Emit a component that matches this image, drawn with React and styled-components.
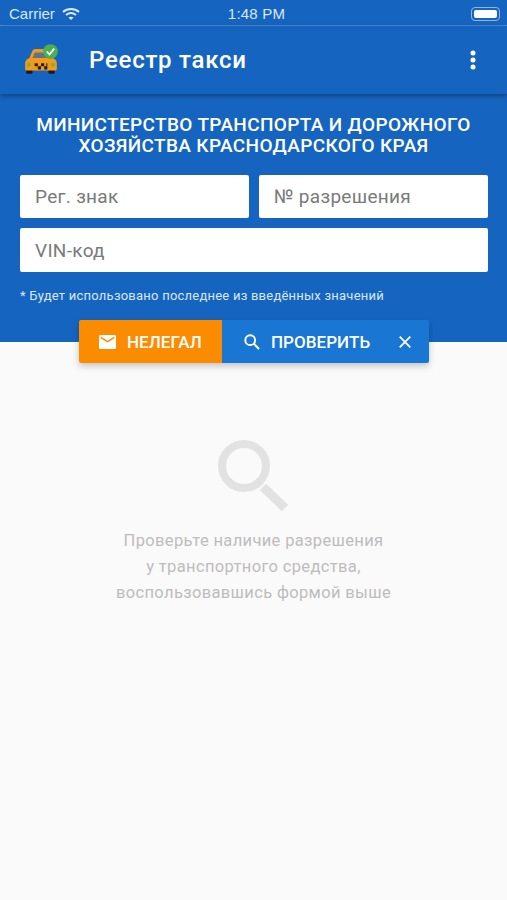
import styled, { createGlobalStyle } from 'styled-components'

const GlobalStyle = createGlobalStyle`
  html, body {
    margin: 0;
    padding: 0;
    background: #fafafa;
  }
  body {
    font-family: Roboto, "Liberation Sans", sans-serif;
  }
`

const Page = styled.div`
  width: 507px;
  height: 900px;
  overflow: hidden;
  display: flex;
  flex-direction: column;
  background: #fafafa;
`

const StatusBar = styled.div`
  height: 26px;
  box-sizing: border-box;
  padding: 2px 7px 0 9px;
  display: grid;
  grid-template-columns: 1fr auto 1fr;
  align-items: center;
  background: #1565c0;
  border-bottom: 1px solid #4f8ad2;
  color: #dbe7f6;
  font-family: "Liberation Sans", sans-serif;
  font-size: 15px;
`

const Carrier = styled.div`
  display: flex;
  align-items: center;
  gap: 7px;
`

const Clock = styled.div`
  padding-left: 4px;
  font-weight: 500;
  letter-spacing: 0.2px;
`

const Battery = styled.div`
  justify-self: end;
  width: 29px;
  height: 14px;
  box-sizing: border-box;
  padding: 2px;
  border: 1px solid #8fb4e2;
  border-radius: 4px;
`

const BatteryFill = styled.div`
  height: 100%;
  background: #fff;
  border-radius: 2px;
`

const AppBar = styled.header`
  position: relative;
  z-index: 2;
  height: 68px;
  box-sizing: border-box;
  padding: 0 31px 0 22px;
  display: flex;
  align-items: center;
  background: #1565c0;
  box-shadow: 0 2px 5px rgba(0, 0, 0, 0.35);
`

const Title = styled.h1`
  flex: 1;
  margin: 0 0 0 29px;
  color: #fff;
  font-size: 24px;
  font-weight: 500;
  letter-spacing: 0.75px;
`

const Form = styled.section`
  height: 248px;
  box-sizing: border-box;
  padding: 20px 20px 0 20px;
  background: #1565c0;
`

const Heading = styled.h2`
  margin: 0 0 19px 0;
  color: #fff;
  text-align: center;
  font-size: 19px;
  line-height: 21px;
  font-weight: 500;
  letter-spacing: 0.35px;
`

const Fields = styled.div`
  display: grid;
  grid-template-columns: 229px 229px;
  column-gap: 10px;
  row-gap: 10px;
`

const Field = styled.div`
  grid-column: ${(props) => (props.$wide ? '1 / 3' : 'auto')};
  height: ${(props) => (props.$wide ? '44px' : '43px')};
  box-sizing: border-box;
  padding-left: 15px;
  display: flex;
  align-items: center;
  background: #fff;
  border-radius: 2px;
  color: #7a7a7a;
  font-size: 19px;
  letter-spacing: 0.3px;
`

const Note = styled.p`
  margin: 16px 0 0 0;
  color: #dbe7f6;
  font-size: 13px;
  line-height: 16px;
  letter-spacing: 0.23px;
`

const ActionBar = styled.div`
  position: relative;
  z-index: 1;
  align-self: flex-start;
  margin: -22px 0 0 79px;
  display: flex;
  height: 43px;
  border-radius: 2px;
  box-shadow: 0 3px 7px rgba(0, 0, 0, 0.22);
  overflow: hidden;
`

const ActionButton = styled.div`
  width: ${(props) => props.$width}px;
  box-sizing: border-box;
  padding-left: ${(props) => props.$inset}px;
  display: flex;
  align-items: center;
  background: ${(props) => props.$color};
  color: #fff;
  font-size: 17px;
  font-weight: 500;
  letter-spacing: 0.05px;
`

const ActionLabel = styled.span`
  margin-left: 11px;
  flex: ${(props) => (props.$grow ? 1 : 'none')};
`

const CloseIcon = styled.svg`
  margin-right: 18px;
`

const Empty = styled.main`
  flex: 1;
  padding-top: 77px;
  display: flex;
  flex-direction: column;
  align-items: center;
`

const EmptyText = styled.p`
  margin: 16px 0 0 0;
  color: #bdbdbd;
  text-align: center;
  font-size: 16.5px;
  line-height: 26px;
  letter-spacing: 0.35px;
`

function WifiIcon() {
  return (
    <svg width="18" height="14" viewBox="0 0 18 14" fill="none" stroke="#dbe7f6" strokeWidth="2">
      <path d="M1 5 C5.5 1 12.5 1 17 5" />
      <path d="M4 8 C7 5.6 11 5.6 14 8" />
      <path d="M9 13 L6.4 10.6 C8 9.4 10 9.4 11.6 10.6 Z" fill="#dbe7f6" stroke="none" />
    </svg>
  )
}

function TaxiLogo() {
  return (
    <svg width="38" height="34" viewBox="0 0 36 32">
      <rect x="4" y="25" width="6" height="4" rx="1.5" fill="#1a1a1a" />
      <rect x="25" y="25" width="6" height="4" rx="1.5" fill="#1a1a1a" />
      <path d="M7 14 L10 7 C10.5 6 11.5 5.5 13 5.5 L23 5.5 C25 5.5 26 6 26.5 7 L29 14 C31.5 15 33 16.5 33 19 L33 24 C33 25.5 32 26 31 26 L5 26 C3.5 26 3 25.5 3 24 L3 19 C3 16.5 4.5 15 7 14 Z" fill="#f59a16" />
      <path d="M10 14 L12 9 L25 9 L26.5 14 Z" fill="#5d7491" />
      <path d="M12 19 h3 v3 h-3 z M18 19 h3 v3 h-3 z M24 19 h-1 v3 h1 z M15 22 h3 v3 h-3 z M21 22 h3 v3 h-3 z" fill="#222" />
      <circle cx="6.5" cy="20.5" r="1.8" fill="#6fb34a" />
      <circle cx="29.5" cy="20.5" r="1.8" fill="#6fb34a" />
      <circle cx="27" cy="8" r="7" fill="#4caf50" />
      <path d="M23.5 8 L26 10.8 L30.5 5.2" fill="none" stroke="#fff" strokeWidth="1.6" />
    </svg>
  )
}

function MoreIcon() {
  return (
    <svg width="6" height="20" viewBox="0 0 6 20" fill="#fff">
      <circle cx="3" cy="3" r="2.5" />
      <circle cx="3" cy="10" r="2.5" />
      <circle cx="3" cy="17" r="2.5" />
    </svg>
  )
}

function MailIcon() {
  return (
    <svg width="17" height="14" viewBox="0 0 17 14" fill="#fff">
      <path d="M1.6 0 H15.4 C16.3 0 17 .7 17 1.6 V12.4 C17 13.3 16.3 14 15.4 14 H1.6 C.7 14 0 13.3 0 12.4 V1.6 C0 .7 .7 0 1.6 0 Z M1.7 3.2 L8.5 7.6 L15.3 3.2 V1.6 L8.5 5.8 L1.7 1.6 Z" fillRule="evenodd" />
    </svg>
  )
}

function SearchIcon() {
  return (
    <svg width="16" height="16" viewBox="0 0 16 16" fill="none" stroke="#fff" strokeWidth="2">
      <circle cx="6.2" cy="6.2" r="4.9" />
      <path d="M9.8 9.8 L15 15" />
    </svg>
  )
}

function BigSearchIcon() {
  return (
    <svg width="72" height="72" viewBox="0 0 72 72" fill="none" stroke="#e2e2e2">
      <circle cx="26" cy="26" r="22" strokeWidth="8" />
      <path d="M45 47 L67 68" strokeWidth="9" />
    </svg>
  )
}

export default function App() {
  return (
    <Page>
      <GlobalStyle />
      <StatusBar>
        <Carrier>
          Carrier
          <WifiIcon />
        </Carrier>
        <Clock>1:48 PM</Clock>
        <Battery>
          <BatteryFill />
        </Battery>
      </StatusBar>
      <AppBar>
        <TaxiLogo />
        <Title>Реестр такси</Title>
        <MoreIcon />
      </AppBar>
      <Form>
        <Heading>
          МИНИСТЕРСТВО ТРАНСПОРТА И ДОРОЖНОГО
          <br />
          ХОЗЯЙСТВА КРАСНОДАРСКОГО КРАЯ
        </Heading>
        <Fields>
          <Field>Рег. знак</Field>
          <Field>№ разрешения</Field>
          <Field $wide>VIN-код</Field>
        </Fields>
        <Note>* Будет использовано последнее из введённых значений</Note>
      </Form>
      <ActionBar>
        <ActionButton $width={143} $inset={20} $color="#fb8c00">
          <MailIcon />
          <ActionLabel>НЕЛЕГАЛ</ActionLabel>
        </ActionButton>
        <ActionButton $width={207} $inset={22} $color="#1976d2">
          <SearchIcon />
          <ActionLabel $grow>ПРОВЕРИТЬ</ActionLabel>
          <CloseIcon width="12" height="12" viewBox="0 0 12 12" stroke="#fff" strokeWidth="1.8">
            <path d="M.7 .7 L11.3 11.3 M11.3 .7 L.7 11.3" />
          </CloseIcon>
        </ActionButton>
      </ActionBar>
      <Empty>
        <BigSearchIcon />
        <EmptyText>
          Проверьте наличие разрешения
          <br />
          у транспортного средства,
          <br />
          воспользовавшись формой выше
        </EmptyText>
      </Empty>
    </Page>
  )
}
